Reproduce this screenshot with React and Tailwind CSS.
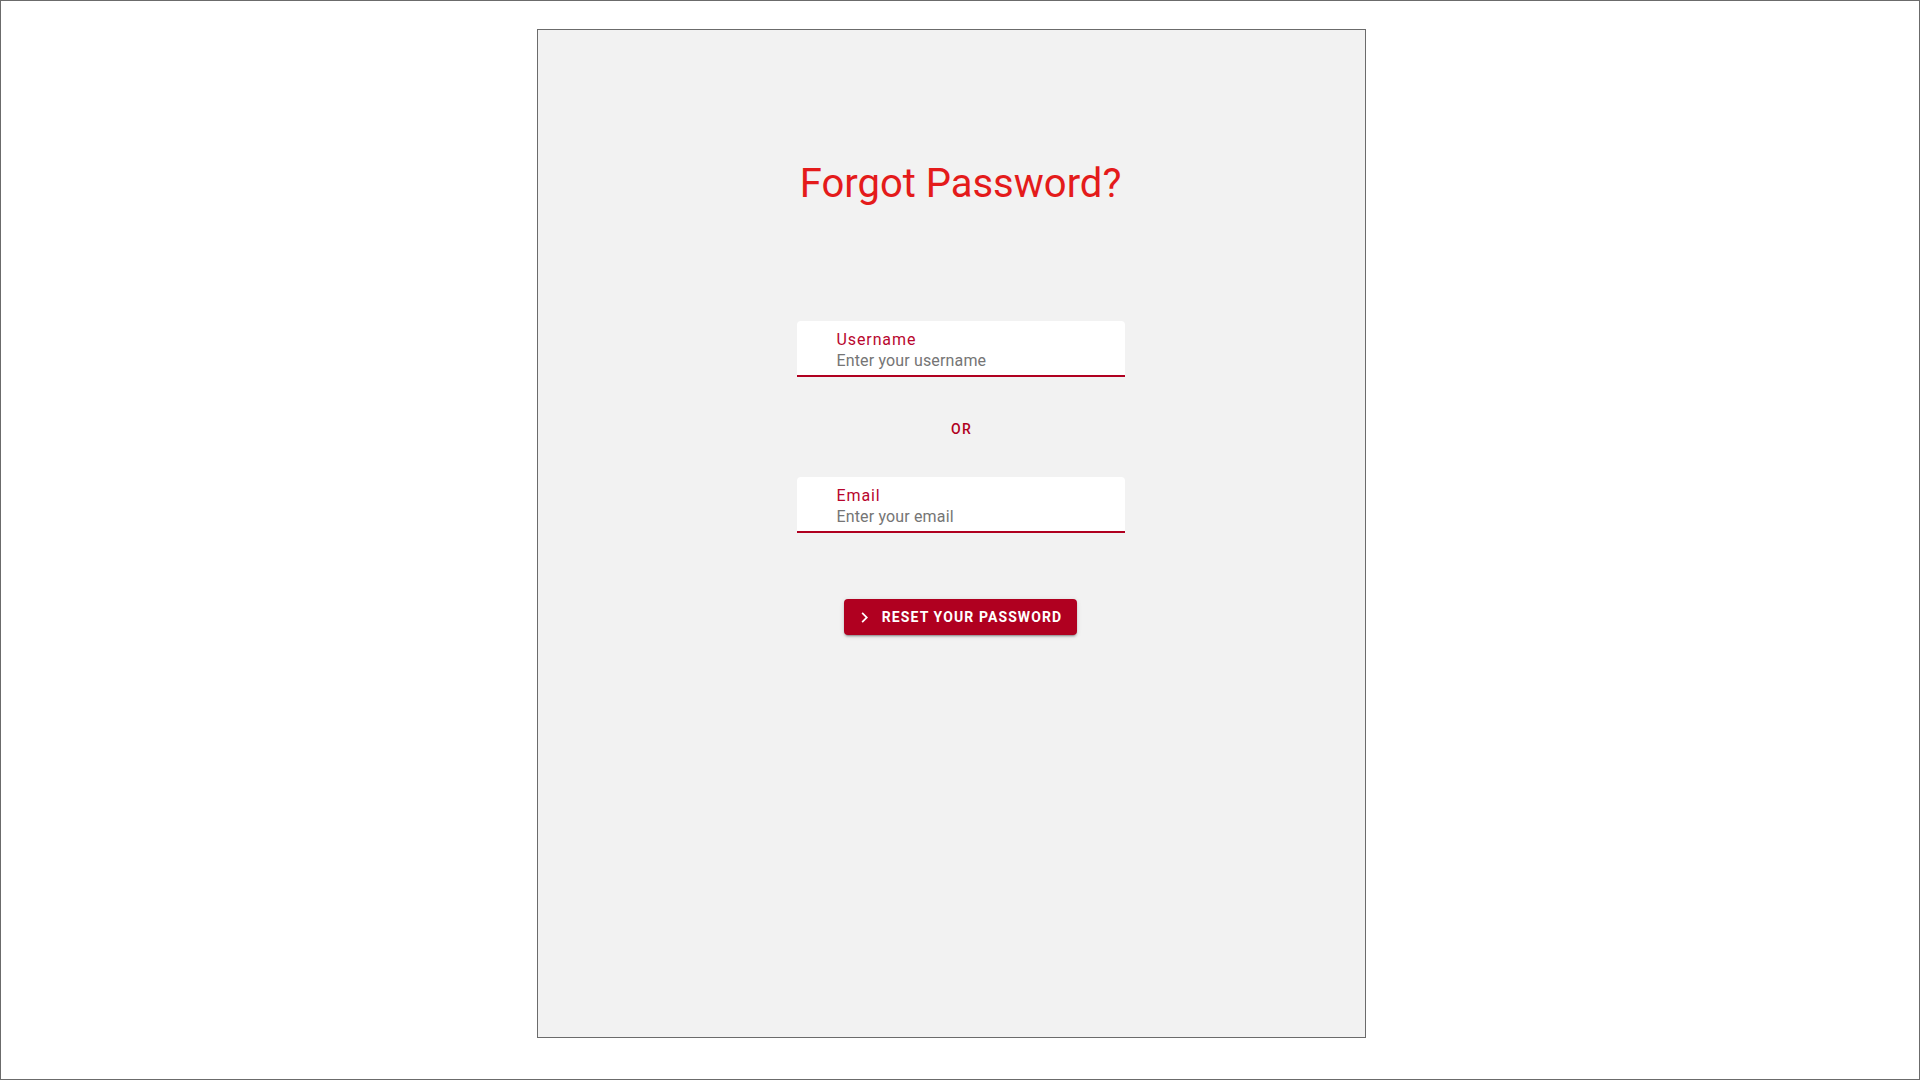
import React from 'react'

function Field({ label, placeholder }) {
  return (
    <div className="w-[328px] h-[56px] bg-white rounded-t-[4px] border-b-2 border-[#b00020] pl-[40px] pt-[9px] flex flex-col">
      <label className="text-[16px] leading-[20px] font-normal text-[#b8062e] tracking-[0.9px]">{label}</label>
      <input
        placeholder={placeholder}
        className="text-[16px] leading-[22px] bg-transparent outline-none text-[#212121] placeholder:text-[#757575] tracking-[0.15px]"
      />
    </div>
  )
}

function App() {
  return (
    <div
      className="w-[1920px] h-[1080px] bg-white border border-[#6b6b6b] overflow-hidden"
      style={{ fontFamily: 'Roboto, "Liberation Sans", sans-serif' }}
    >
      <div className="ml-[536px] mt-[28px] w-[829px] h-[1009px] bg-[#f2f2f2] border border-[#6b6b6b] pl-[18px] flex flex-col items-center">
        <h1 className="mt-[130px] text-[40px] leading-[48px] font-normal text-[#e41b1b]">Forgot Password?</h1>

        <div className="mt-[113px]">
          <Field label="Username" placeholder="Enter your username" />
        </div>

        <p className="mt-[42px] pl-[2px] text-[14px] leading-[20px] font-medium tracking-[1.25px] text-[#b00020]">OR</p>

        <div className="mt-[38px]">
          <Field label="Email" placeholder="Enter your email" />
        </div>

        <button className="mt-[66px] h-[36px] pl-[10px] pr-[15px] flex items-center gap-[7px] bg-[#b00020] text-white rounded-[4px] shadow-[0_3px_1px_-2px_rgba(0,0,0,0.2),0_2px_2px_0_rgba(0,0,0,0.14),0_1px_5px_0_rgba(0,0,0,0.12)]">
          <svg viewBox="0 0 24 24" className="w-[21px] h-[21px]" fill="currentColor">
            <path d="M10 6L8.59 7.41 13.17 12l-4.58 4.59L10 18l6-6z" />
          </svg>
          <span className="text-[14px] leading-[16px] font-bold tracking-[1.1px] uppercase">Reset your password</span>
        </button>
      </div>
    </div>
  )
}

export default App
